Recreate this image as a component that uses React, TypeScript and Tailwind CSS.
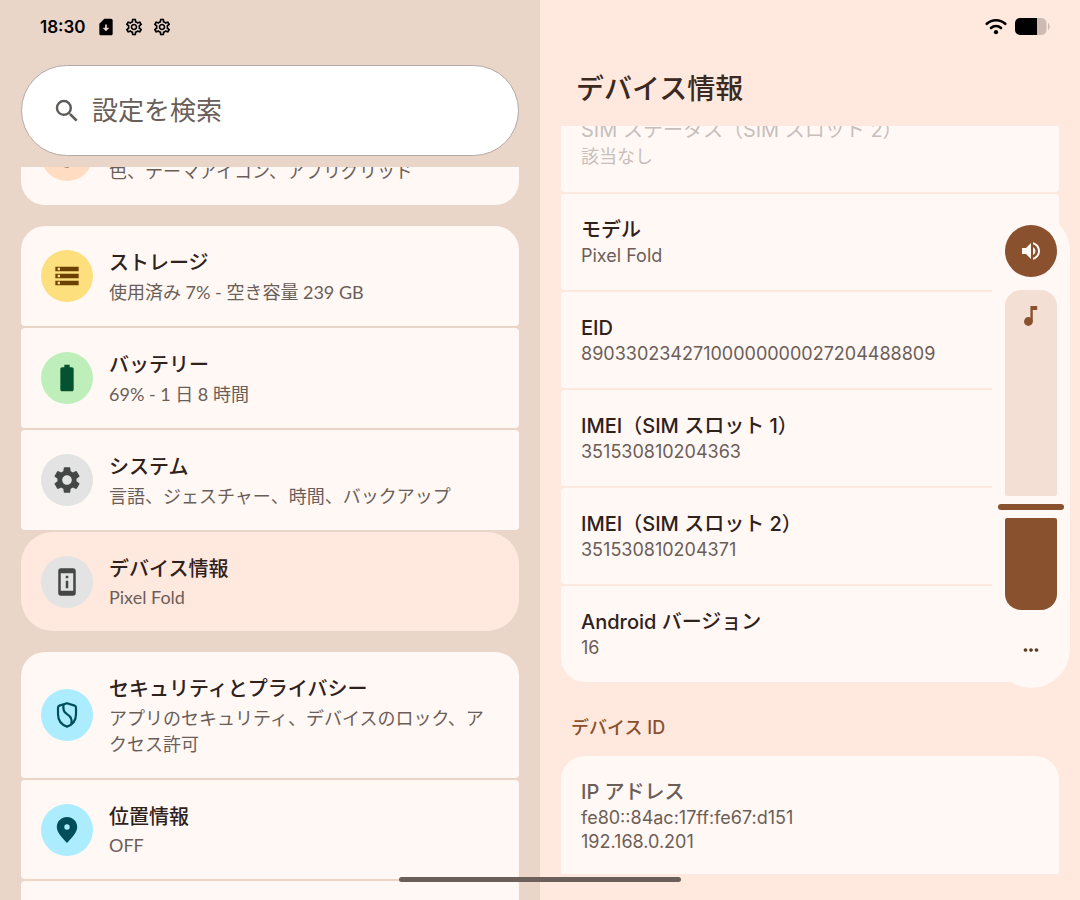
import { useState } from "react";
import type { ReactNode } from "react";
import {
  MdBatteryFull,
  MdMoreHoriz,
  MdOutlineSettings,
  MdPalette,
  MdPermDeviceInformation,
  MdSearch,
  MdSettings,
  MdSimCardDownload,
  MdStorage,
  MdVolumeUp,
} from "react-icons/md";

interface MenuItem {
  title: string;
  summary: string;
  icon: ReactNode;
  iconClass: string;
  latin?: boolean;
}

function ShieldIcon() {
  return (
    <svg viewBox="0 0 28 28" className="size-7" fill="none" stroke="currentColor" strokeWidth="2.2" strokeLinejoin="round">
      <path d="M14 2.2 L21.6 4.600 Q23 5.100 23 6.600 V13 C23 19.500 19.400 23.800 14 25.600 C8.600 23.800 5 19.500 5 13 V6.600 Q5 5.100 6.400 4.600 Z" />
      <path d="M10.600 3.600 C9.600 8.500 10.600 11 14 13.200 C17.800 15.600 19.600 18.500 18.200 23" />
    </svg>
  );
}

function PinIcon() {
  return (
    <svg viewBox="0 0 28 28" className="size-7" fill="currentColor" fillRule="evenodd">
      <path d="M14 1 C8.300 1 3.800 5.400 3.800 11 C3.800 16.500 9 21.500 14 27 C19 21.500 24.200 16.500 24.200 11 C24.200 5.400 19.700 1 14 1 Z M14 8.300 A2.700 2.700 0 1 1 14 13.700 A2.700 2.700 0 1 1 14 8.300 Z" />
    </svg>
  );
}

function NoteIcon() {
  return (
    <svg viewBox="0 0 14 20" className="h-5 w-3.5" fill="currentColor">
      <circle cx="4.400" cy="15.500" r="4.400" />
      <path d="M6.400 0 H13.200 V4 H8.800 V15.500 H6.400 Z" />
    </svg>
  );
}

function WifiIcon() {
  return (
    <svg viewBox="0 0 22 18" className="h-[18px] w-[22px]" fill="none" stroke="currentColor" strokeWidth="2.6" strokeLinecap="round">
      <path d="M1.8 5.8 C7 1 15 1 20.2 5.8" />
      <path d="M6 10 C8.8 7.4 13.2 7.4 16 10" />
      <circle cx="11" cy="14.2" r="2.1" fill="currentColor" stroke="none" />
    </svg>
  );
}

function BatteryIcon() {
  return (
    <svg viewBox="0 0 36 17" className="h-[17px] w-9">
      <path d="M5 0 H22 V17 H5 A5 5 0 0 1 0 12 V5 A5 5 0 0 1 5 0 Z" fill="#000" />
      <path d="M22 0 H26.500 A5 5 0 0 1 31.500 5 V12 A5 5 0 0 1 26.500 17 H22 Z" fill="#cdbab2" />
      <path d="M33 5 C35.200 6 35.200 11 33 12 Z" fill="#cdbab2" />
    </svg>
  );
}

const displayItems: MenuItem[] = [
  {
    title: "壁紙とスタイル",
    summary: "色、テーマアイコン、アプリグリッド",
    icon: <MdPalette className="size-[30px]" />,
    iconClass: "bg-[#ffdcc2] text-[#5b2c10]",
  },
];

const systemItems: MenuItem[] = [
  {
    title: "ストレージ",
    summary: "使用済み 7% - 空き容量 239 GB",
    icon: <MdStorage className="size-7" />,
    iconClass: "bg-[#fddf7d] text-[#6b4000]",
  },
  {
    title: "バッテリー",
    summary: "69% - 1 日 8 時間",
    icon: <MdBatteryFull className="size-8" />,
    iconClass: "bg-[#beefbb] text-[#04522f]",
  },
  {
    title: "システム",
    summary: "言語、ジェスチャー、時間、バックアップ",
    icon: <MdSettings className="size-8" />,
    iconClass: "bg-[#e2e3e2] text-[#444746]",
  },
  {
    title: "デバイス情報",
    summary: "Pixel Fold",
    icon: <MdPermDeviceInformation className="size-[30px]" />,
    iconClass: "bg-[#e2e3e2] text-[#444746]",
    latin: true,
  },
];

const securityItems: MenuItem[] = [
  {
    title: "セキュリティとプライバシー",
    summary: "アプリのセキュリティ、デバイスのロック、アクセス許可",
    icon: <ShieldIcon />,
    iconClass: "bg-[#abedff] text-[#004e5c]",
  },
  {
    title: "位置情報",
    summary: "OFF",
    icon: <PinIcon />,
    iconClass: "bg-[#abedff] text-[#004e5c]",
    latin: true,
  },
  {
    title: "緊急情報と緊急通報",
    summary: "緊急 SOS、医療に関する情報、アラート",
    icon: null,
    iconClass: "bg-[#ffdad6]",
  },
];

const deviceRows = [
  { label: "モデル", value: "Pixel Fold" },
  { label: "EID", value: "89033023427100000000027204488809" },
  { label: "IMEI（SIM スロット 1）", value: "351530810204363" },
  { label: "IMEI（SIM スロット 2）", value: "351530810204371" },
  { label: "Android バージョン", value: "16" },
];

function MenuGroup({
  items,
  selected,
  onSelect,
}: {
  items: MenuItem[];
  selected: string;
  onSelect: (title: string) => void;
}) {
  return (
    <ul className="flex flex-col gap-0.5">
      {items.map((item) => (
        <li key={item.title} className="group">
          <button
            type="button"
            onClick={() => onSelect(item.title)}
            className={`flex w-full items-center gap-4 px-5 py-[21px] text-left ${
              item.title === selected
                ? "rounded-[32px] bg-[#ffe9df]"
                : "rounded-sm bg-[#fff8f5] group-first:rounded-t-3xl group-last:rounded-b-3xl"
            }`}
          >
            <span className={`flex size-[52px] shrink-0 items-center justify-center rounded-full ${item.iconClass}`}>
              {item.icon}
            </span>
            <span className="flex-1">
              <span className="block text-[20px] leading-8 font-medium text-[#2f211b]">{item.title}</span>
              <span
                className={`block font-['Lato','Noto_Sans_CJK_JP',sans-serif] text-[18px] text-[#6b5e58] ${
                  item.latin ? "leading-[25px]" : "leading-[26px]"
                }`}
              >
                {item.summary}
              </span>
            </span>
          </button>
        </li>
      ))}
    </ul>
  );
}

function VolumePanel() {
  const [volume, setVolume] = useState(31);
  const [muted, setMuted] = useState(false);
  const level = muted ? 0 : volume;

  return (
    <div className="absolute top-[212px] right-2.5 flex w-[78px] flex-col items-center rounded-full bg-[#fff8f5] pt-[13px] pb-3">
      <button
        type="button"
        aria-label="着信モード"
        onClick={() => setMuted(!muted)}
        className="flex size-[52px] items-center justify-center rounded-full bg-[#8a512e] text-[#fff8f5]"
      >
        <MdVolumeUp className="size-6" />
      </button>

      <div className="relative mt-[13px] flex h-80 w-[66px] flex-col items-center gap-2">
        <div
          className="flex w-[52px] justify-center overflow-hidden rounded-t-2xl rounded-b-xs bg-[#f4dfd5]"
          style={{ flexGrow: 100 - level, flexBasis: 0 }}
        >
          <span className="mt-4 text-[#8a512e]">
            <NoteIcon />
          </span>
        </div>
        <div className="h-1.5 w-full rounded-full bg-[#8a512e]" />
        <div className="w-[52px] rounded-t-xs rounded-b-2xl bg-[#8a512e]" style={{ flexGrow: level, flexBasis: 0 }} />
        <input
          type="range"
          aria-label="メディアの音量"
          min={0}
          max={100}
          value={level}
          onChange={(e) => {
            setMuted(false);
            setVolume(Number(e.target.value));
          }}
          className="absolute inset-0 h-full w-full cursor-pointer opacity-0 [direction:rtl] [writing-mode:vertical-lr]"
        />
      </div>

      <button type="button" aria-label="その他" className="mt-3.5 flex size-[52px] items-center justify-center text-[#5d3a26]">
        <MdMoreHoriz className="size-[22px]" />
      </button>
    </div>
  );
}

export default function App() {
  const [selected, setSelected] = useState("デバイス情報");
  const [query, setQuery] = useState("");

  return (
    <div className="relative grid h-screen grid-cols-2 overflow-hidden font-['Inter','Noto_Sans_CJK_JP',sans-serif]">
      {/* Settings list */}
      <div className="flex min-h-0 flex-col bg-[#ead5c9] px-[21px]">
        <div className="flex h-[65px] shrink-0 items-start gap-2.5 px-[19px] pt-[15px] text-black">
          <span className="text-[17px] leading-6 font-semibold">18:30</span>
          <div className="flex h-6 items-center gap-2">
            <MdSimCardDownload className="size-5" />
            <MdOutlineSettings className="size-5" />
            <MdOutlineSettings className="size-5" />
          </div>
        </div>

        <label className="flex h-[91px] shrink-0 items-center gap-2.5 rounded-full border border-[#b5a9a3] bg-white px-[30px]">
          <MdSearch className="size-[30px] text-[#5f5b59]" />
          <input
            type="search"
            aria-label="設定を検索"
            placeholder="設定を検索"
            value={query}
            onChange={(e) => setQuery(e.target.value)}
            className="w-full min-w-0 flex-1 bg-transparent text-[26px] text-[#2f211b] outline-none placeholder:text-[#6b5e58]"
          />
        </label>

        <nav className="mt-[11px] min-h-0 flex-1 overflow-hidden">
          <div className="-mt-[62px] flex flex-col gap-[21px]">
            <MenuGroup items={displayItems} selected={selected} onSelect={setSelected} />
            <MenuGroup items={systemItems} selected={selected} onSelect={setSelected} />
            <MenuGroup items={securityItems} selected={selected} onSelect={setSelected} />
          </div>
        </nav>
      </div>

      {/* Device details */}
      <main className="flex min-h-0 flex-col bg-[#ffe9df] px-[21px] pb-[26px]">
        <div className="flex h-[65px] shrink-0 items-start justify-end gap-2 pt-[18px] pr-2">
          <WifiIcon />
          <BatteryIcon />
        </div>
        <h1 className="h-[61px] shrink-0 px-[15px] text-[28px] leading-[48px] font-medium text-[#3b2a21]">デバイス情報</h1>

        <div className="min-h-0 flex-1 overflow-hidden">
          <dl className="-mt-8 flex flex-col gap-0.5">
            <div className="rounded-sm bg-[#fff8f5] px-5 py-[22px] text-[#c6bfbc]">
              <dt className="text-[20px] leading-7">SIM ステータス（SIM スロット 2）</dt>
              <dd className="text-[18px] leading-[26px]">該当なし</dd>
            </div>
            {deviceRows.map((row) => (
              <div key={row.label} className="rounded-sm bg-[#fff8f5] px-5 py-[22px] last:rounded-b-3xl">
                <dt className="text-[20px] leading-7 font-medium text-[#2f211b]">{row.label}</dt>
                <dd className="text-[18px] leading-6 text-[#6b5e58]">{row.value}</dd>
              </div>
            ))}
          </dl>

          <h2 className="px-2.5 pt-8 pb-3.5 text-[18px] leading-7 font-medium text-[#8a512e]">デバイス ID</h2>

          <dl className="rounded-t-3xl bg-[#fff8f5] px-5 py-[22px] text-[#6b5e58]">
            <dt className="text-[20px] leading-7 font-medium">IP アドレス</dt>
            <dd className="text-[18px] leading-6">fe80::84ac:17ff:fe67:d151</dd>
            <dd className="text-[18px] leading-6">192.168.0.201</dd>
            <dd className="h-6" />
          </dl>
        </div>
      </main>

      <VolumePanel />

      {/* Gesture handle */}
      <div className="absolute bottom-[18px] left-1/2 h-[5px] w-[282px] -translate-x-1/2 rounded-full bg-[#6b5f5a]" />
    </div>
  );
}
